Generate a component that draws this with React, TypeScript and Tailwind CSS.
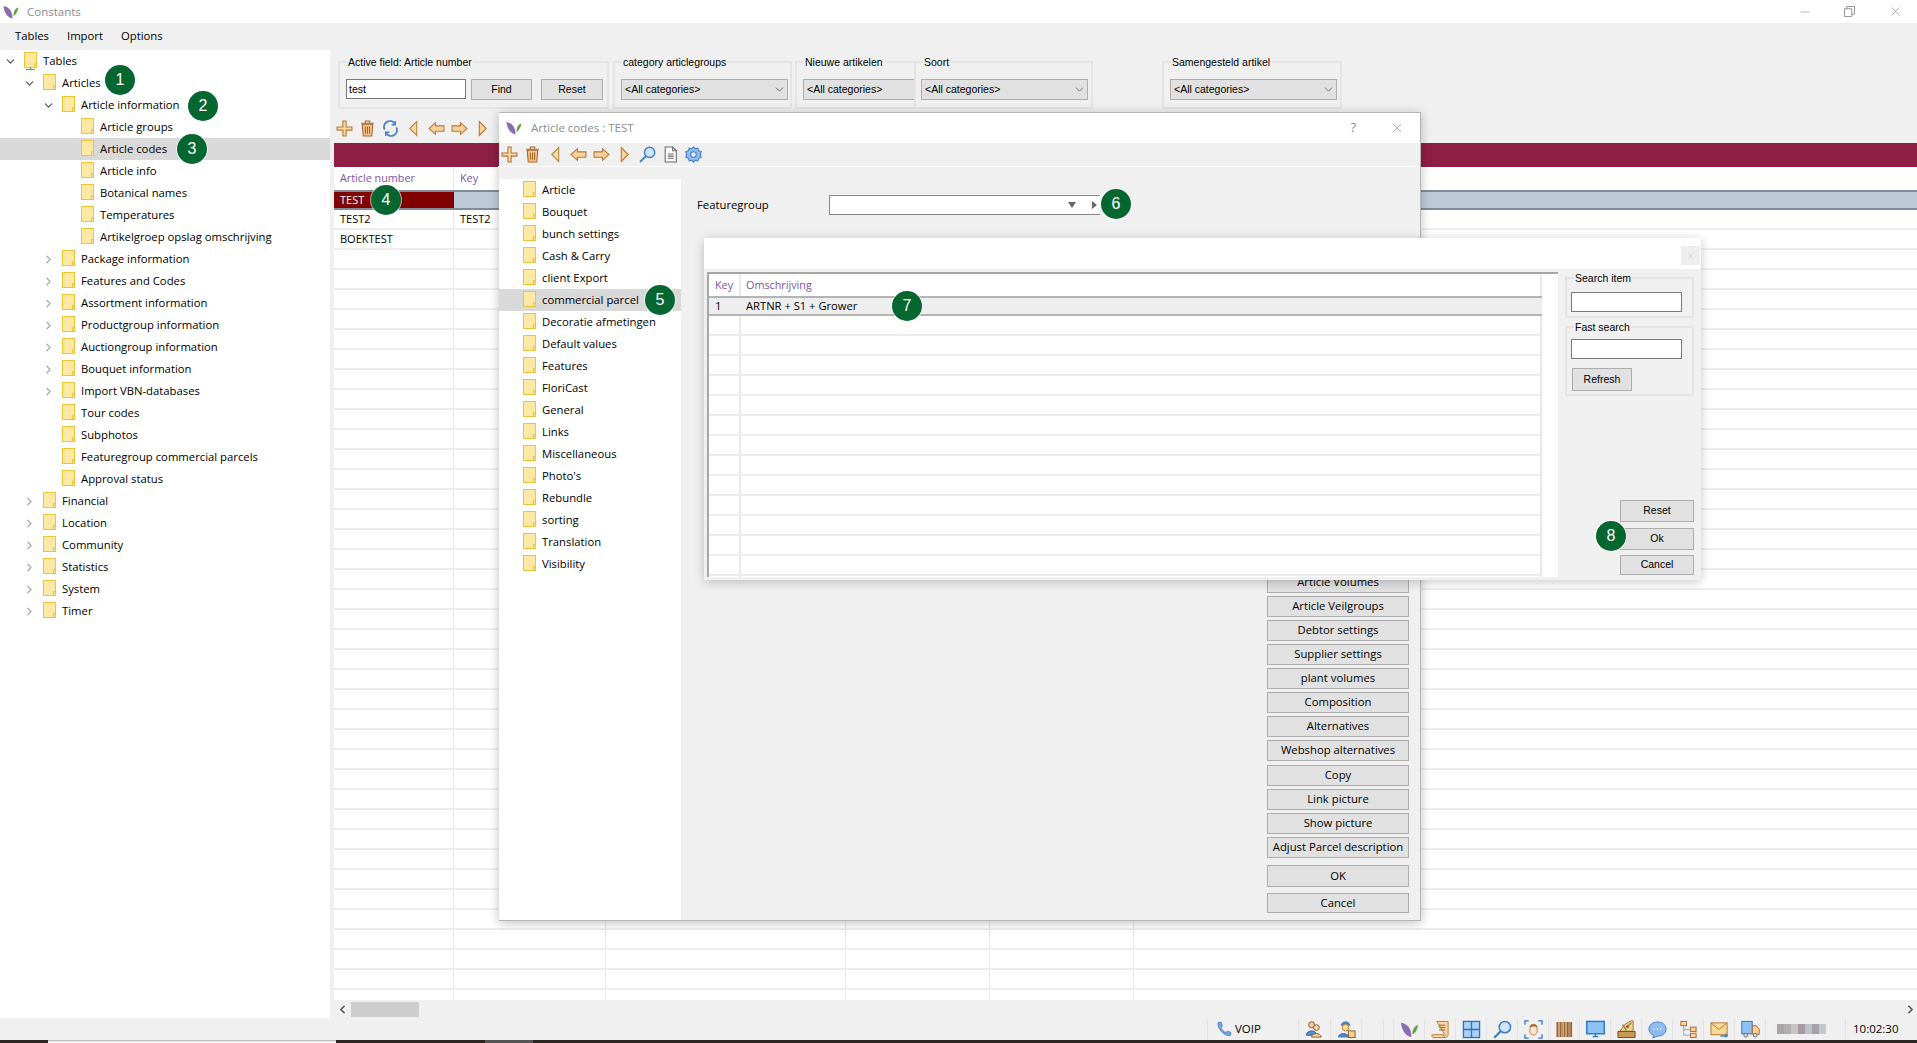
import { ChevronDown, ChevronRight, ChevronLeft, Minus, X } from 'lucide-react';
import type { ReactNode } from 'react';

type TreeItem = { label: string; depth: number; arrow?: 'open' | 'closed'; selected?: boolean; root?: boolean };

const mainTree: TreeItem[] = [
  { label: 'Tables', depth: 0, arrow: 'open', root: true },
  { label: 'Articles', depth: 1, arrow: 'open' },
  { label: 'Article information', depth: 2, arrow: 'open' },
  { label: 'Article groups', depth: 3 },
  { label: 'Article codes', depth: 3, selected: true },
  { label: 'Article info', depth: 3 },
  { label: 'Botanical names', depth: 3 },
  { label: 'Temperatures', depth: 3 },
  { label: 'Artikelgroep opslag omschrijving', depth: 3 },
  { label: 'Package information', depth: 2, arrow: 'closed' },
  { label: 'Features and Codes', depth: 2, arrow: 'closed' },
  { label: 'Assortment information', depth: 2, arrow: 'closed' },
  { label: 'Productgroup information', depth: 2, arrow: 'closed' },
  { label: 'Auctiongroup information', depth: 2, arrow: 'closed' },
  { label: 'Bouquet information', depth: 2, arrow: 'closed' },
  { label: 'Import VBN-databases', depth: 2, arrow: 'closed' },
  { label: 'Tour codes', depth: 2 },
  { label: 'Subphotos', depth: 2 },
  { label: 'Featuregroup commercial parcels', depth: 2 },
  { label: 'Approval status', depth: 2 },
  { label: 'Financial', depth: 1, arrow: 'closed' },
  { label: 'Location', depth: 1, arrow: 'closed' },
  { label: 'Community', depth: 1, arrow: 'closed' },
  { label: 'Statistics', depth: 1, arrow: 'closed' },
  { label: 'System', depth: 1, arrow: 'closed' },
  { label: 'Timer', depth: 1, arrow: 'closed' },
];

const modalTree = [
  'Article', 'Bouquet', 'bunch settings', 'Cash & Carry', 'client Export', 'commercial parcel',
  'Decoratie afmetingen', 'Default values', 'Features', 'FloriCast', 'General', 'Links',
  'Miscellaneous', 'Photo\'s', 'Rebundle', 'sorting', 'Translation', 'Visibility',
];

const sideButtons = [
  'Article Volumes', 'Article Veilgroups', 'Debtor settings', 'Supplier settings', 'plant volumes',
  'Composition', 'Alternatives', 'Webshop alternatives',
];
const sideButtons2 = ['Copy', 'Link picture', 'Show picture', 'Adjust Parcel description'];

const indent = ['pl-[1px]', 'pl-[20px]', 'pl-[39px]', 'pl-[58px]'];

const gridRows = [
  ['TEST2', 'TEST2'],
  ['BOEKTEST', ''],
  ...Array.from({ length: 38 }, () => ['', '']),
];

function Logo() {
  return (
    <svg viewBox="0 0 16 14" className="w-[16px] h-[14px] shrink-0">
      <path d="M0.5 1 C6 2 9.5 6 9.5 13.5 C4 12.5 1 7 0.5 1Z" fill="#8a6cb0" />
      <path d="M15.5 2.5 C14.5 7 12.5 10 10.5 11 C10.5 6.5 12 3.5 15.5 2.5Z" fill="#5f9e3c" />
    </svg>
  );
}

function Folder({ root }: { root?: boolean }) {
  return (
    <svg viewBox="0 0 13 18" className="w-[13px] h-[18px] shrink-0">
      <rect x="0.5" y="0.5" width="12" height="15" fill="#fee9a4" stroke="#efc437" />
      <path d="M10.5 15.5 V11.5 H12.5" fill="#fdd96b" stroke="#efc437" />
      {root && <path d="M6.5 15.5 V17 M2 17.5 H11" stroke="#35b52c" strokeWidth="1.2" />}
    </svg>
  );
}

function Badge({ n, className }: { n: number; className: string }) {
  return (
    <div
      className={`absolute w-[30px] h-[30px] rounded-full bg-[#05662f] text-white flex items-center justify-center text-[16px] font-['Liberation_Sans',sans-serif] shadow-[0_0_0_1px_rgba(255,255,255,0.6)] ${className}`}
    >
      {n}
    </div>
  );
}

function Btn({ children, className = '' }: { children: ReactNode; className?: string }) {
  return (
    <div className={`flex items-center justify-center bg-[#e1e1e1] border border-[#adadad] text-black shrink-0 whitespace-nowrap ${className}`}>
      {children}
    </div>
  );
}

function Field({ className = '' }: { className?: string }) {
  return <div className={`bg-white border border-[#7a7a7a] h-[20px] ${className}`} />;
}

function Group({ title, className = '', children }: { title: string; className?: string; children: ReactNode }) {
  return (
    <fieldset className={`border-2 border-[#e4e4e4] shrink-0 min-w-0 ${className}`}>
      <legend className="ml-[7px] px-[1px] h-[14px] leading-[14px] text-black whitespace-nowrap">{title}</legend>
      {children}
    </fieldset>
  );
}

function AllCategories({ className = '', arrow = true }: { className?: string; arrow?: boolean }) {
  return (
    <div className={`h-[21px] bg-[#e1e1e1] border border-[#adadad] flex items-center justify-between pl-[3px] pr-[1px] ${className}`}>
      <span>{'<All categories>'}</span>
      {arrow && <ChevronDown className="w-[13px] h-[13px] text-[#555]" strokeWidth={1.5} />}
    </div>
  );
}

function IconCell({ children }: { children: ReactNode }) {
  return <div className="w-[23px] h-[23px] shrink-0 flex items-center justify-center">{children}</div>;
}

const svgBox = 'w-[17px] h-[17px]';

function PlusIcon() {
  return (
    <svg viewBox="0 0 16 16" className={svgBox}>
      <path d="M6.5 1 H9.5 V6.5 H15 V9.5 H9.5 V15 H6.5 V9.5 H1 V6.5 H6.5Z" fill="#fbd9a4" stroke="#b5773a" />
    </svg>
  );
}

function TrashIcon() {
  return (
    <svg viewBox="0 0 16 16" className={svgBox}>
      <path d="M3 4 H13 L12 15 H4Z" fill="#f6c48a" stroke="#a8672c" />
      <path d="M2 3 H14 M6 2.5 V1 H10 V2.5 M6 6 V13 M8 6 V13 M10 6 V13" stroke="#a8672c" fill="none" />
    </svg>
  );
}

function RefreshIcon() {
  return (
    <svg viewBox="0 0 16 16" className={svgBox} fill="none" stroke="#4a7fc4" strokeWidth="1.8">
      <path d="M2.5 9 A5.5 5.5 0 0 1 12 3.5" />
      <path d="M13.5 7 A5.5 5.5 0 0 1 4 12.5" />
      <path d="M12.5 1 V4.5 H9M3.5 15 V11.5 H7" strokeWidth="1.3" />
    </svg>
  );
}

function FirstIcon() {
  return (
    <svg viewBox="0 0 16 16" className={svgBox}>
      <path d="M11 1.5 V14.5 L4.5 8Z" fill="#fbd9a4" stroke="#b08a3a" />
    </svg>
  );
}

function LastIcon() {
  return (
    <svg viewBox="0 0 16 16" className={svgBox}>
      <path d="M5 1.5 V14.5 L11.5 8Z" fill="#fbd39a" stroke="#b5773a" />
    </svg>
  );
}

function BackIcon() {
  return (
    <svg viewBox="0 0 16 16" className={svgBox}>
      <path d="M7 2.5 V5.5 H15 V10.5 H7 V13.5 L1 8Z" fill="#fbd39a" stroke="#b5773a" />
    </svg>
  );
}

function ForwardIcon() {
  return (
    <svg viewBox="0 0 16 16" className={svgBox}>
      <path d="M9 2.5 V5.5 H1 V10.5 H9 V13.5 L15 8Z" fill="#fbd39a" stroke="#b5773a" />
    </svg>
  );
}

function SearchIcon({ className = svgBox }: { className?: string }) {
  return (
    <svg viewBox="0 0 16 16" className={className}>
      <circle cx="10" cy="6" r="4.8" fill="#cfe6fa" stroke="#3f7cc4" strokeWidth="1.3" />
      <path d="M6.5 9.5 L1 15" stroke="#3f7cc4" strokeWidth="1.8" />
    </svg>
  );
}

function DocIcon() {
  return (
    <svg viewBox="0 0 16 16" className={svgBox} fill="none" stroke="#6b6b6b">
      <path d="M3 1 H10 L13.5 4.5 V15 H3Z" fill="#fafafa" />
      <path d="M10 1 V4.5 H13.5 M5.5 7.5 H11 M5.5 9.5 H11 M5.5 11.5 H11" />
    </svg>
  );
}

function GearIcon() {
  return (
    <svg viewBox="0 0 16 16" className={svgBox}>
      <path d="M8 0.8 L9.6 2.6 L12 2 L12.8 4.4 L15.2 5.2 L14.4 8 L15.2 10.8 L12.8 11.6 L12 14 L9.6 13.4 L8 15.2 L6.4 13.4 L4 14 L3.2 11.6 L0.8 10.8 L1.6 8 L0.8 5.2 L3.2 4.4 L4 2 L6.4 2.6Z" fill="#8fbdf0" stroke="#3f7cc4" />
      <circle cx="8" cy="8" r="2.6" fill="#f0f0f0" stroke="#3f7cc4" />
    </svg>
  );
}

const statusSvg = 'w-[19px] h-[19px]';

const statusIcons: ReactNode[] = [
  <svg viewBox="0 0 20 20" className={statusSvg} key="logo">
    <path d="M1 3 C8 4 12 9 12 18 C5 17 2 10 1 3Z" fill="#8a6cb0" />
    <path d="M19 5 C18 11 16 14 13 15 C13 10 15 7 19 5Z" fill="#5f9e3c" />
  </svg>,
  <svg viewBox="0 0 20 20" className={statusSvg} key="scroll">
    <path d="M6 1.5 H18 V15 C18 17 17 18.5 15 18.5 H2.5 C1.5 18.5 1 17 1 15.5 H13 V17 C14 18 15 17 15 16 Z" fill="#fbd9a4" stroke="#b5773a" />
    <path d="M8.5 5.5 H15 M8.5 8 H15 M8.5 10.5 H15" stroke="#8a5a26" />
  </svg>,
  <svg viewBox="0 0 20 20" className={statusSvg} key="grid">
    <rect x="1.5" y="1.5" width="17" height="17" fill="#a9d0f5" stroke="#2f73c9" strokeWidth="1.4" />
    <path d="M10 1.5 V18.5 M1.5 10 H18.5" stroke="#2f73c9" strokeWidth="1.4" />
  </svg>,
  <SearchIcon className={statusSvg} key="search" />,
  <svg viewBox="0 0 20 20" className={statusSvg} key="face">
    <path d="M1 5 V1 H5 M15 1 H19 V5 M19 15 V19 H15 M5 19 H1 V15" fill="none" stroke="#2f73c9" strokeWidth="1.3" />
    <ellipse cx="10" cy="11" rx="4" ry="5" fill="#fbe3cc" stroke="#c77e46" />
    <path d="M5.5 8 C6 3 14 3 14.5 8 C12 6 8 6 5.5 8Z" fill="#a8672c" />
  </svg>,
  <svg viewBox="0 0 20 20" className={statusSvg} key="barcode">
    <path d="M2.5 2 V18 M6 2 V18 M10 2 V18 M13.5 2 V18 M17 2 V18" stroke="#a0642e" strokeWidth="2" />
    <path d="M4.3 2 V18 M8 2 V18 M11.8 2 V18 M15.3 2 V18" stroke="#a0642e" strokeWidth="0.8" />
  </svg>,
  <svg viewBox="0 0 20 20" className={statusSvg} key="monitor">
    <rect x="0.8" y="1.5" width="18.4" height="13" fill="#8dc2f7" stroke="#2f73c9" strokeWidth="1.5" />
    <path d="M7 17.5 H13 M10 14.5 V17.5" stroke="#2f73c9" strokeWidth="1.5" />
  </svg>,
  <svg viewBox="0 0 20 20" className={statusSvg} key="register">
    <path d="M3 12 L8 5 L14 1 H17 V12Z" fill="#f4d48f" stroke="#a8672c" />
    <path d="M1 12 H19 V18.5 H1Z" fill="#c99a55" stroke="#6d4a1e" />
    <path d="M6 5 L10 11 M12 6 L15 3" stroke="#5f9e3c" strokeWidth="1.5" />
    <circle cx="11" cy="7" r="1.5" fill="#c0392b" />
  </svg>,
  <svg viewBox="0 0 20 20" className={statusSvg} key="chat">
    <path d="M10 2 C15 2 19 5 19 9.5 C19 14 15 17 10 17 L5 19 L6 16 C3 15 1 12.5 1 9.5 C1 5 5 2 10 2Z" fill="#8dbcf0" stroke="#4a7fc4" />
    <path d="M6 9.5 H7 M9.5 9.5 H10.5 M13 9.5 H14" stroke="#fff" strokeWidth="1.6" />
  </svg>,
  <svg viewBox="0 0 20 20" className={statusSvg} key="tree">
    <path d="M5 6 V16 H12 M5 10 H12" fill="none" stroke="#6fa8e8" />
    <rect x="2" y="1.5" width="6" height="4.5" fill="#fbd39a" stroke="#a8672c" />
    <rect x="12" y="7.5" width="6" height="4.5" fill="#fbd39a" stroke="#a8672c" />
    <rect x="12" y="14" width="6" height="4.5" fill="#fbd39a" stroke="#a8672c" />
  </svg>,
  <svg viewBox="0 0 20 20" className={statusSvg} key="mail">
    <rect x="1" y="3" width="17" height="12.5" fill="#fbd99a" stroke="#a8772c" />
    <path d="M1 3 L9.5 10 L18 3" fill="none" stroke="#a8772c" />
    <path d="M11 16 H16 V14 L19.5 16.5 L16 19 V17.5 H11Z" fill="#3f7cc4" />
  </svg>,
  <svg viewBox="0 0 20 20" className={statusSvg} key="truck">
    <rect x="0.8" y="1.5" width="11" height="13" fill="#8dc2f7" stroke="#2f73c9" />
    <path d="M12 6 H16 L19.2 10 V15 H12Z" fill="#fbd39a" stroke="#a8672c" />
    <circle cx="5" cy="16" r="2" fill="#ddd" stroke="#666" />
    <circle cx="15" cy="16" r="2" fill="#ddd" stroke="#666" />
  </svg>,
];

const blurred = [
  'bg-[#efefef]', 'bg-[#a8a4a6]', 'bg-[#b2aeb0]', 'bg-[#c8c4c6]', 'bg-[#a49aa0]', 'bg-[#b8c4c8]', 'bg-[#a4a4a8]', 'bg-[#c4c8ca]',
];

export default function App() {
  return (
    <div className="relative w-[1917px] h-[1043px] overflow-hidden flex flex-col bg-[#f0f0f0] text-black text-[11.3px] font-['Open_Sans',sans-serif]">
      {/* window title */}
      <div className="h-[23px] bg-white flex items-center shrink-0">
        <div className="ml-[3px]"><Logo /></div>
        <span className="ml-[8px] text-[11.5px] text-[#8d8d8d]">Constants</span>
        <div className="ml-auto flex items-center text-[#8a8a8a]">
          <Minus className="w-[14px] h-[14px] mr-[32px]" strokeWidth={1} />
          <svg viewBox="0 0 12 12" className="w-[11px] h-[11px] mr-[33px]" fill="none" stroke="currentColor">
            <path d="M0.5 3 H8.5 V11.5 H0.5Z M3 3 V0.5 H11.5 V9 H8.5" />
          </svg>
          <X className="w-[15px] h-[15px] mr-[14px]" strokeWidth={1} />
        </div>
      </div>

      {/* menu */}
      <div className="h-[27px] flex items-center pl-[15px] gap-[18px] shrink-0 text-[11.3px]">
        <span>Tables</span>
        <span>Import</span>
        <span>Options</span>
      </div>

      <div className="flex-1 min-h-0 flex">
        {/* left tree */}
        <div className="w-[330px] bg-white shrink-0">
          {mainTree.map((item) => (
            <div
              key={item.label}
              className={`h-[22px] flex items-center ${indent[item.depth]} ${item.selected ? 'bg-[#d9d9d9]' : ''}`}
            >
              <div className="w-[19px] flex justify-center shrink-0">
                {item.arrow === 'open' && <ChevronDown className="w-[13px] h-[13px] text-[#555]" strokeWidth={2.2} />}
                {item.arrow === 'closed' && <ChevronRight className="w-[13px] h-[13px] text-[#aaa]" strokeWidth={2.2} />}
              </div>
              <div className="ml-[4px]"><Folder root={item.root} /></div>
              <span className="ml-[6px] whitespace-nowrap">{item.label}</span>
            </div>
          ))}
        </div>

        {/* right side */}
        <div className="flex-1 min-w-0 flex flex-col">
          <div className="h-[70px] pt-[5px] pl-[8px] flex shrink-0 text-[10.5px] font-['Liberation_Sans',sans-serif]">
            <Group title="Active field: Article number" className="w-[271px] h-[54px]">
              <div className="pt-[10px] pl-[6px] flex">
                <div className="bg-white border border-[#7a7a7a] h-[20px] w-[120px] pl-[2px] leading-[18px]">test</div>
                <Btn className="ml-[5px] w-[61px] h-[21px]">Find</Btn>
                <Btn className="ml-[9px] w-[62px] h-[21px]">Reset</Btn>
              </div>
            </Group>
            <Group title="category articlegroups" className="ml-[4px] w-[179px] h-[54px]">
              <div className="pt-[10px] pl-[6px]"><AllCategories className="w-[167px]" /></div>
            </Group>
            <Group title="Nieuwe artikelen" className="ml-[3px] w-[119px] h-[54px] border-r-0">
              <div className="pt-[10px] pl-[6px]"><AllCategories className="w-[111px] border-r-0" arrow={false} /></div>
            </Group>
            <Group title="Soort" className="w-[179px] h-[54px]">
              <div className="pt-[10px] pl-[5px]"><AllCategories className="w-[167px]" /></div>
            </Group>
            <Group title="Samengesteld artikel" className="ml-[69px] w-[180px] h-[54px]">
              <div className="pt-[10px] pl-[6px]"><AllCategories className="w-[167px]" /></div>
            </Group>
          </div>

          <div className="h-[23px] pl-[3px] pb-[7px] flex items-center shrink-0">
            <IconCell><PlusIcon /></IconCell>
            <IconCell><TrashIcon /></IconCell>
            <IconCell><RefreshIcon /></IconCell>
            <IconCell><FirstIcon /></IconCell>
            <IconCell><BackIcon /></IconCell>
            <IconCell><ForwardIcon /></IconCell>
            <IconCell><LastIcon /></IconCell>
          </div>

          <div className="flex-1 min-h-0 ml-[4px] flex flex-col">
            <div className="h-[24px] bg-[#8e1f44] shrink-0" />
            <div className="flex-1 min-h-0 bg-white overflow-hidden">
              <div className="h-[23px] flex items-center text-[#7b55a8] text-[10.8px]">
                <div className="w-[120px] h-full pl-[6px] border-r border-[#e6e6e6] flex items-center">Article number</div>
                <div className="pl-[6px]">Key</div>
              </div>
              <div className="h-[20px] flex items-stretch border-y-2 border-[#7f8b99] bg-[#bdcbd9]">
                <div className="w-[120px] bg-[#800000] text-white text-[11px] pl-[6px] flex items-center">TEST</div>
              </div>
              {gridRows.map((row, i) => (
                <div key={i} className="h-[20px] flex border-b-2 border-[#eeeeee] text-[11px]">
                  <div className="w-[120px] shrink-0 pl-[6px] pt-[1px] border-r border-[#e6e6e6] flex items-center">{row[0]}</div>
                  <div className="w-[152px] shrink-0 pl-[6px] pt-[1px] border-r border-[#e6e6e6] flex items-center">{row[1]}</div>
                  <div className="w-[240px] shrink-0 border-r border-[#e6e6e6]" />
                  <div className="w-[144px] shrink-0 border-r border-[#e6e6e6]" />
                  <div className="w-[144px] shrink-0 border-r border-[#e6e6e6]" />
                </div>
              ))}
            </div>
            <div className="h-[18px] flex items-center justify-between shrink-0 relative">
              <div className="flex items-center">
                <ChevronLeft className="ml-[2px] w-[13px] h-[13px] text-[#555]" strokeWidth={3} />
                <div className="ml-[2px] w-[68px] h-[15px] bg-[#cdcdcd]" />
              </div>
              <ChevronRight className="mr-[0px] w-[13px] h-[13px] text-[#555]" strokeWidth={3} />
            </div>
          </div>
        </div>
      </div>

      {/* status bar */}
      <div className="h-[22px] flex justify-end items-center shrink-0">
        <div className="w-[91px] h-full border-l border-[#e2e2e2] flex items-center pl-[8px]">
          <svg viewBox="0 0 16 16" className="w-[16px] h-[16px]">
            <path d="M2 1.5 L5 1 L6.5 5 L5 6.5 C6 9 7.5 10.5 10 11.5 L11.5 10 L15 11.5 L14.5 14.5 C9 16 1 8 2 1.5Z" fill="#6fa5de" stroke="#3f7cc4" strokeWidth="0.7" />
          </svg>
          <span className="ml-[3px] text-[11.5px]">VOIP</span>
        </div>
        <div className="w-[32px] h-full border-l border-[#e2e2e2] flex items-center justify-center">
          <svg viewBox="0 0 20 20" className={statusSvg}>
            <circle cx="7" cy="5" r="3.2" fill="#f2c79c" stroke="#8a5a26" />
            <path d="M1.5 16 C1.5 10 12.5 10 12.5 16Z" fill="#5c8fd0" stroke="#2f5f9e" />
            <circle cx="12" cy="8" r="3" fill="#f7d7b2" stroke="#8a5a26" />
            <path d="M7 18 C7 13 17 13 17 18Z" fill="#f7d28c" stroke="#8a5a26" />
          </svg>
        </div>
        <div className="w-[31px] h-full border-l border-[#e2e2e2] flex items-center justify-center">
          <svg viewBox="0 0 20 20" className={statusSvg}>
            <path d="M4 6 C4 0 14 0 14 6Z" fill="#4a82c9" />
            <circle cx="9" cy="8" r="3.5" fill="#fbe07f" stroke="#b5773a" />
            <path d="M1 18.5 C1 12 13 12 13 18.5Z" fill="#4a82c9" />
            <rect x="12" y="11.5" width="7" height="7" fill="#f7d28c" stroke="#8a5a26" />
          </svg>
        </div>
        <div className="w-[22px] h-full border-l border-[#e2e2e2]" />
        <div className="w-[10px] h-full border-l border-[#e2e2e2]" />
        {statusIcons.map((icon, i) => (
          <div key={i} className="w-[31px] h-full border-l border-[#e2e2e2] flex items-center justify-center">
            {icon}
          </div>
        ))}
        <div className="w-[80px] h-full border-l border-[#e2e2e2] flex items-center pl-[4px]">
          <div className="flex h-[10px]">
            {blurred.map((c, i) => (
              <div key={i} className={`w-[7px] h-full ${c}`} />
            ))}
          </div>
        </div>
        <div className="w-[72px] h-full border-l border-[#e2e2e2] flex items-center pl-[7px] text-[11.5px]">10:02:30</div>
      </div>

      {/* windows taskbar sliver */}
      <div className="h-[3px] flex shrink-0 bg-[#2b2523]">
        <div className="w-[48px]" />
        <div className="w-[288px] bg-[#f0f0f0] border-t border-[#bbb]" />
        <div className="w-[149px]" />
        <div className="w-[48px] bg-[#555]" />
      </div>

      {/* article codes window */}
      <div className="absolute left-[499px] top-[112px] w-[922px] h-[809px] flex flex-col bg-[#f0f0f0] border-t border-r border-b border-[#b5b5b5] shadow-[0_2px_10px_rgba(0,0,0,0.25)]">
        <div className="h-[30px] bg-white flex items-center shrink-0">
          <div className="ml-[7px]"><Logo /></div>
          <span className="ml-[9px] text-[11.5px] text-[#8d8d8d]">Article codes : TEST</span>
          <span className="ml-auto mr-[33px] text-[13px] text-[#8a8a8a]">?</span>
          <X className="mr-[15px] w-[16px] h-[16px] text-[#8a8a8a]" strokeWidth={1} />
        </div>
        <div className="h-[24px] flex items-center shrink-0 border-b border-white -ml-[1px]">
          <IconCell><PlusIcon /></IconCell>
          <IconCell><TrashIcon /></IconCell>
          <IconCell><FirstIcon /></IconCell>
          <IconCell><BackIcon /></IconCell>
          <IconCell><ForwardIcon /></IconCell>
          <IconCell><LastIcon /></IconCell>
          <IconCell><SearchIcon /></IconCell>
          <IconCell><DocIcon /></IconCell>
          <IconCell><GearIcon /></IconCell>
        </div>
        <div className="flex-1 min-h-0 flex pt-[12px]">
          <div className="w-[182px] bg-white shrink-0">
            {modalTree.map((name) => (
              <div
                key={name}
                className={`h-[22px] flex items-center pl-[24px] ${name === 'commercial parcel' ? 'bg-[#d9d9d9]' : ''}`}
              >
                <Folder />
                <span className="ml-[6px] whitespace-nowrap">{name}</span>
              </div>
            ))}
          </div>
          <div className="flex-1 min-w-0 flex flex-col">
            <div className="flex items-center h-[20px] mt-[16px] pl-[16px]">
              <span className="w-[132px]">Featuregroup</span>
              <div className="w-[271px] h-[20px] bg-white border border-[#8a8a8a] border-r-0 flex items-center justify-end text-[#555]">
                <svg viewBox="0 0 8 6" className="w-[8px] h-[6px] mr-[16px]"><path d="M0 0 H8 L4 6Z" fill="#666" /></svg>
                <svg viewBox="0 0 5 8" className="w-[5px] h-[8px] mr-[3px]"><path d="M0 0 V8 L5 4Z" fill="#666" /></svg>
              </div>
            </div>
            <div className="mt-auto flex flex-col items-end pr-[11px] pb-[7px]">
              {sideButtons.map((b) => (
                <Btn key={b} className="w-[142px] h-[21px] mb-[3px]">{b}</Btn>
              ))}
              <div className="h-[1px]" />
              {sideButtons2.map((b) => (
                <Btn key={b} className="w-[142px] h-[21px] mb-[3px]">{b}</Btn>
              ))}
              <Btn className="w-[142px] h-[22px] mt-[4px]">OK</Btn>
              <Btn className="w-[142px] h-[20px] mt-[6px]">Cancel</Btn>
            </div>
          </div>
        </div>
      </div>

      {/* lookup window */}
      <div className="absolute left-[704px] top-[238px] w-[997px] h-[342px] flex flex-col bg-[#f0f0f0] shadow-[0_2px_10px_rgba(0,0,0,0.22)]">
        <div className="h-[31px] bg-white flex items-start justify-end shrink-0">
          <div className="mt-[8px] mr-[1px] w-[19px] h-[19px] bg-[#eeeeee] flex items-center justify-center">
            <X className="w-[8px] h-[8px] text-[#cfcfcf]" strokeWidth={2} />
          </div>
        </div>
        <div className="flex-1 min-h-0 flex">
          <div className="ml-[3px] mt-[3px] mb-[3px] w-[851px] bg-white border-l-2 border-t-2 border-[#a6a6a6] overflow-hidden flex flex-col">
            <div className="h-[22px] flex items-center text-[#7b55a8] shrink-0 w-[833px] border-r-2 border-[#e8e8e8] text-[10.8px]">
              <div className="w-[32px] h-full pl-[6px] border-r-2 border-[#e8e8e8] flex items-center">Key</div>
              <div className="pl-[5px]">Omschrijving</div>
            </div>
            <div className="h-[20px] flex bg-[#eeeeee] border-y-2 border-[#b4b4b4] w-[833px] shrink-0 text-[11.2px]">
              <div className="w-[32px] pl-[6px] flex items-center">1</div>
              <div className="pl-[5px] flex items-center">ARTNR + S1 + Grower</div>
            </div>
            {Array.from({ length: 14 }, (_, i) => (
              <div key={i} className="h-[20px] flex border-b-2 border-[#eeeeee] w-[833px] shrink-0 border-r-2 border-r-[#e8e8e8]">
                <div className="w-[32px] border-r-2 border-[#e8e8e8]" />
              </div>
            ))}
          </div>
          <div className="flex-1 min-w-0 flex flex-col pt-[2px] pl-[7px] pr-[7px] pb-[5px] text-[10.5px] font-['Liberation_Sans',sans-serif]">
            <Group title="Search item" className="h-[47px]">
              <div className="pt-[7px] pl-[4px]"><Field className="w-[111px]" /></div>
            </Group>
            <Group title="Fast search" className="h-[76px] mt-[2px]">
              <div className="pt-[5px] pl-[4px]">
                <Field className="w-[111px]" />
                <Btn className="mt-[9px] ml-[1px] w-[60px] h-[23px]">Refresh</Btn>
              </div>
            </Group>
            <div className="mt-auto flex flex-col items-end">
              <Btn className="w-[74px] h-[22px]">Reset</Btn>
              <Btn className="w-[74px] h-[22px] mt-[6px]">Ok</Btn>
              <Btn className="w-[74px] h-[20px] mt-[5px]">Cancel</Btn>
            </div>
          </div>
        </div>
      </div>

      <Badge n={1} className="left-[105px] top-[65px]" />
      <Badge n={2} className="left-[188px] top-[91px]" />
      <Badge n={3} className="left-[177px] top-[134px]" />
      <Badge n={4} className="left-[371px] top-[185px]" />
      <Badge n={5} className="left-[645px] top-[285px]" />
      <Badge n={6} className="left-[1101px] top-[189px]" />
      <Badge n={7} className="left-[892px] top-[291px]" />
      <Badge n={8} className="left-[1596px] top-[521px]" />
    </div>
  );
}
